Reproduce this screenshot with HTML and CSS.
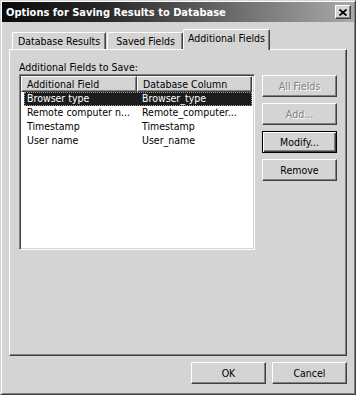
FILE: index.html
```html
<!DOCTYPE html>
<html lang="en">
    <head>
        <meta charset="UTF-8" />
        <title>Options for Saving Results to Database</title>
        <link rel="stylesheet" href="styles.css">
    </head>

    <body>
        <div class="window">
            <div class="titlebar">
                <span class="title">Options for Saving Results to Database</span>
                <div class="close">
                    <svg width="8" height="7" viewBox="0 0 8 7">
                        <path d="M0.5 0.5 L7.5 6.5 M7.5 0.5 L0.5 6.5" stroke="#000" stroke-width="1.8" fill="none" />
                    </svg>
                </div>
            </div>

            <div class="main">
                <div class="tabs">
                    <div class="tab">Database Results</div>
                    <div class="tab">Saved Fields</div>
                    <div class="tab active">Additional Fields</div>
                </div>

                <div class="panel">
                    <div class="label">Additional Fields to Save:</div>
                    <div class="content">
                        <div class="listview">
                            <div class="lv-head">
                                <div class="hcell h1">Additional Field</div>
                                <div class="hcell h2">Database Column</div>
                            </div>
                            <div class="row selected">
                                <div class="c1">Browser type</div>
                                <div class="c2">Browser_type</div>
                            </div>
                            <div class="row">
                                <div class="c1">Remote computer n...</div>
                                <div class="c2">Remote_computer...</div>
                            </div>
                            <div class="row">
                                <div class="c1">Timestamp</div>
                                <div class="c2">Timestamp</div>
                            </div>
                            <div class="row">
                                <div class="c1">User name</div>
                                <div class="c2">User_name</div>
                            </div>
                        </div>

                        <div class="side">
                            <button class="btn" disabled>All Fields</button>
                            <button class="btn" disabled>Add...</button>
                            <button class="btn default">Modify...</button>
                            <button class="btn">Remove</button>
                        </div>
                    </div>
                </div>

                <div class="footer">
                    <button class="btn">OK</button>
                    <button class="btn">Cancel</button>
                </div>
            </div>
        </div>
    </body>
</html>
```

FILE: styles.css
```css
* {
    margin: 0;
    padding: 0;
    box-sizing: border-box;
}

body {
    background: #d4d4d4;
    font-family: "DejaVu Sans Condensed", "Liberation Sans", sans-serif;
    font-size: 10.5px;
    color: #000;
}

.window {
    width: 356px;
    height: 395px;
    display: flex;
    flex-direction: column;
    padding: 1px;
    border: 1px solid;
    border-color: #d4d4d4 #404040 #404040 #d4d4d4;
    box-shadow: inset 1px 1px #fff, inset -1px -1px #808080;
}

/* title bar */
.titlebar {
    height: 20px;
    display: flex;
    align-items: center;
    justify-content: space-between;
    padding: 0 3px 0 4px;
    background: linear-gradient(90deg, #0a0a0a, #2a2a2a 30%, #aaa);
}

.title {
    color: #fff;
    font-weight: bold;
    font-size: 11px;
}

.close {
    width: 16px;
    height: 14px;
    display: flex;
    align-items: center;
    justify-content: center;
    background: #d4d4d4;
    border: 1px solid;
    border-color: #fff #404040 #404040 #fff;
    box-shadow: inset -1px -1px #808080;
}

.main {
    flex: 1;
    display: flex;
    flex-direction: column;
    padding: 7px 7px 9px 7px;
}

/* tabs */
.tabs {
    display: flex;
    align-items: flex-end;
    height: 20px;
    padding-left: 3px;
}

.tab {
    height: 17px;
    padding: 0 5px;
    margin-right: 1px;
    line-height: 16px;
    white-space: nowrap;
    border: 1px solid;
    border-bottom: 0;
    border-color: #fff #404040 transparent #fff;
    border-radius: 2px 2px 0 0;
    box-shadow: inset -1px 0 #808080;
}

.tab:nth-child(2) {
    padding: 0 7px 0 8px;
}

.tab.active {
    position: relative;
    z-index: 1;
    height: 21px;
    margin: 0 -2px -1px -1px;
    padding: 0 4px;
    background: #d4d4d4;
}

.panel {
    flex: 1;
    padding: 11px 9px 0 9px;
    border: 1px solid;
    border-color: #fff #404040 #404040 #fff;
    box-shadow: inset -1px -1px #808080;
}

.label {
    height: 13px;
    line-height: 13px;
}

.content {
    display: flex;
    align-items: flex-start;
    gap: 7px;
}

/* list view */
.listview {
    width: 237px;
    height: 176px;
    background: #fff;
    border: 1px solid;
    border-color: #808080 #fff #fff #808080;
    box-shadow: inset 1px 1px #404040, inset -1px -1px #d4d4d4;
    padding: 1px;
}

.lv-head {
    display: flex;
    height: 16px;
}

.hcell {
    height: 16px;
    line-height: 14px;
    padding-left: 5px;
    background: #d4d4d4;
    border: 1px solid;
    border-color: #fff #404040 #404040 #fff;
    box-shadow: inset -1px -1px #808080;
    white-space: nowrap;
    overflow: hidden;
}

.h1 {
    width: 116px;
}

.h2 {
    width: 115px;
}

.row {
    display: flex;
    height: 14px;
    line-height: 13px;
    width: 228px;
    margin-left: 3px;
    white-space: nowrap;
}

.row .c1 {
    width: 113px;
    padding-left: 3px;
}

.row .c2 {
    width: 115px;
    padding-left: 5px;
}

.row.selected {
    background: #1c1c1c;
    color: #fff;
    outline: 1px dotted #9a9a9a;
    outline-offset: -1px;
}

/* buttons */
.side {
    display: flex;
    flex-direction: column;
    gap: 6px;
    padding-top: 1px;
}

.btn {
    width: 75px;
    height: 22px;
    font: inherit;
    color: #000;
    background: #d4d4d4;
    border: 1px solid;
    border-color: #fff #404040 #404040 #fff;
    box-shadow: inset -1px -1px #808080;
}

.btn:disabled {
    color: #808080;
    text-shadow: 1px 1px #fff;
}

.btn.default {
    border-color: #000;
    box-shadow: inset 1px 1px #fff, inset -1px -1px #404040, inset -2px -2px #808080;
}

.footer {
    display: flex;
    justify-content: flex-end;
    gap: 6px;
    margin-top: 6px;
}
```
